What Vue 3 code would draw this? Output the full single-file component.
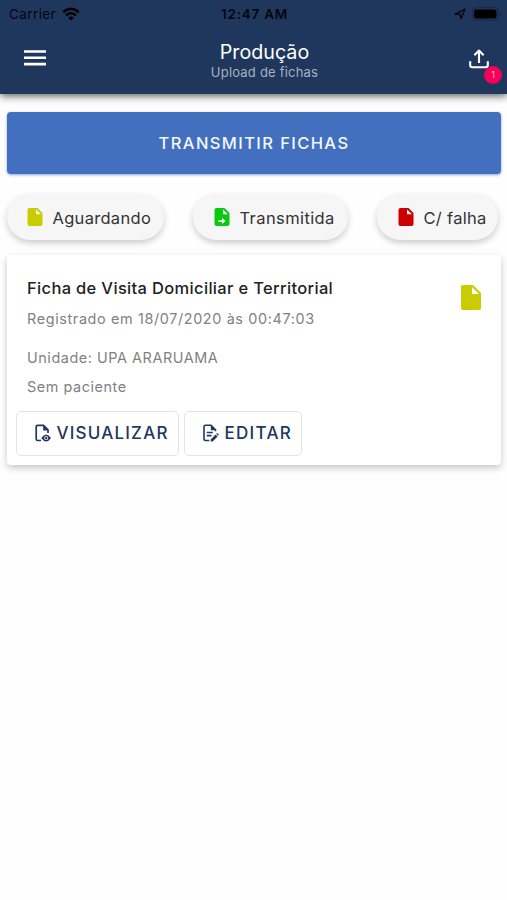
<script setup>
const filters = [
  { label: 'Aguardando', tone: 'waiting', arrow: false },
  { label: 'Transmitida', tone: 'sent', arrow: true },
  { label: 'C/ falha', tone: 'failed', arrow: false },
]
const pendingCount = 1
</script>

<template>
  <div class="screen">
    <header class="header">
      <div class="status">
        <div class="carrier">
          <span class="carrier-name">Carrier</span>
          <svg class="wifi" viewBox="0 0 18 14">
            <path d="M1.3 5.2Q9-1.6 16.7 5.2" fill="none" stroke="#000" stroke-width="2.5" />
            <path d="M4 8.3Q9 4.1 14 8.3" fill="none" stroke="#000" stroke-width="2.3" />
            <path d="M6.2 10.7Q9 8.4 11.8 10.7L9 13.7Z" fill="#000" />
          </svg>
        </div>
        <span class="clock">12:47 AM</span>
        <div class="indicators">
          <svg class="location" viewBox="0 0 12 12">
            <path d="M1 6.2L11 1.2L7 10.6L6 6.4Z" fill="none" stroke="#03060b" stroke-width="1.4" stroke-linejoin="round" />
          </svg>
          <svg class="battery" viewBox="0 0 30 14">
            <rect x="0.7" y="0.7" width="25.6" height="12.4" rx="3.6" fill="none" stroke="#182b4a" stroke-width="1.2" />
            <rect x="2" y="2.5" width="22.5" height="9" rx="2.2" fill="#000" />
            <path d="M28 4.8Q30.2 7 28 9.2Z" fill="#14243f" />
          </svg>
        </div>
      </div>
      <div class="toolbar">
        <svg class="menu" viewBox="0 0 22 16">
          <path d="M0 1.5H22M0 7.8H22M0 14.1H22" stroke="#fff" stroke-width="2.6" />
        </svg>
        <div class="heading">
          <h1>Produção</h1>
          <p>Upload de fichas</p>
        </div>
        <div class="upload">
          <svg viewBox="0 0 20 20">
            <path d="M1.2 12.2V16.2Q1.2 18.2 3.2 18.2H16.8Q18.8 18.2 18.8 16.2V12.2M10 14V2.2M5.4 6.2L10 1.6L14.6 6.2" fill="none" stroke="#fff" stroke-width="2.1" stroke-linejoin="round" />
          </svg>
          <span class="badge">{{ pendingCount }}</span>
        </div>
      </div>
    </header>

    <main class="content">
      <button class="transmit"><span>TRANSMITIR FICHAS</span></button>

      <div class="filters">
        <div v-for="item in filters" :key="item.tone" class="chip" :class="item.tone">
          <svg class="file" viewBox="0 0 16 20">
            <path fill-rule="evenodd" d="M2 1H10.5L15.5 6V17Q15.5 19 13.5 19H2.5Q.5 19 .5 17V3Q.5 1 2.5 1ZM9 2.6V7.3H14Z" />
            <path v-if="item.arrow" d="M4.5 13.2H8V11L11.6 14L8 17V14.9H4.5Z" fill="#fff" />
          </svg>
          <span>{{ item.label }}</span>
        </div>
      </div>

      <article class="card">
        <div class="summary">
          <div>
            <h2>Ficha de Visita Domiciliar e Territorial</h2>
            <p class="date">Registrado em 18/07/2020 às 00:47:03</p>
            <p class="unit">Unidade: UPA ARARUAMA</p>
            <p class="patient">Sem paciente</p>
          </div>
          <svg class="state" viewBox="0 0 20 25">
            <path fill-rule="evenodd" d="M2 0H12L20 8V23Q20 25 18 25H2Q0 25 0 23V2Q0 0 2 0ZM11 2V9H18Z" />
          </svg>
        </div>
        <div class="actions">
          <button class="action view">
            <svg viewBox="0 0 16 18">
              <path d="M6 16.5H2.7Q1.2 16.5 1.2 15V2.8Q1.2 1.3 2.7 1.3H8.5L13 5.8V9" fill="none" stroke="#20375f" stroke-width="1.7" />
              <path d="M8.2 .8V6.4H13.8Z" fill="#20375f" />
              <path fill-rule="evenodd" d="M6.3 14Q11.2 7 16 14Q11.2 21 6.3 14ZM11.2 12A2 2 0 1 0 11.2 16A2 2 0 1 0 11.2 12Z" fill="#20375f" />
              <circle cx="11.2" cy="14" r="1.2" fill="#20375f" />
            </svg>
            <span>VISUALIZAR</span>
          </button>
          <button class="action edit">
            <svg viewBox="0 0 16 18">
              <path d="M6.3 16.5H2.5Q1 16.5 1 15V2.8Q1 1.3 2.5 1.3H8L12.5 5.8V7.2M3.8 8.5H9.8M3.8 11.6H8.5" fill="none" stroke="#20375f" stroke-width="1.6" />
              <path d="M7.8 .8V6.2H13.2Z" fill="#20375f" />
              <path d="M7.7 17.5V15.4L12.6 10.4L14.6 12.4L9.6 17.5ZM13.2 9.8L14.1 8.9L16 10.8L15.1 11.8Z" fill="#20375f" />
            </svg>
            <span>EDITAR</span>
          </button>
        </div>
      </article>
    </main>
  </div>
</template>

<style>
body {
  margin: 0;
  background: #fefefe;
}
</style>

<style scoped>
* {
  box-sizing: border-box;
}
.screen {
  width: 507px;
  height: 900px;
  overflow: hidden;
  font-family: Inter, "Liberation Sans", sans-serif;
  background: #fefefe;
}
h1, h2, p {
  margin: 0;
  font-weight: 400;
  white-space: nowrap;
}
span {
  white-space: nowrap;
}
svg {
  display: block;
  flex: none;
}
button {
  font-family: inherit;
  padding: 0;
  margin: 0;
}
.header {
  height: 94px;
  background: #20375d;
  box-shadow: 0 2px 8px rgba(0, 0, 0, .65);
}
.status {
  height: 28px;
  display: grid;
  grid-template-columns: 1fr auto 1fr;
  align-items: center;
  padding: 0 5px 0 9px;
  color: #03060b;
}
.carrier {
  display: flex;
  align-items: center;
  gap: 6px;
}
.carrier-name {
  font-size: 13.5px;
  letter-spacing: .4px;
}
.wifi {
  width: 18px;
  height: 14px;
}
.clock {
  font-size: 13.5px;
  font-weight: 600;
  letter-spacing: .75px;
  margin-right: 2px;
}
.indicators {
  display: flex;
  justify-content: flex-end;
  align-items: center;
  gap: 6px;
}
.location {
  width: 12px;
  height: 12px;
}
.battery {
  width: 30px;
  height: 14px;
}
.toolbar {
  height: 66px;
  display: grid;
  grid-template-columns: 60px 1fr 38px;
  padding-left: 24px;
}
.menu {
  width: 22px;
  height: 16px;
  margin-top: 22px;
}
.heading {
  text-align: center;
  padding-right: 24px;
}
h1 {
  margin-top: 12px;
  font-size: 19.7px;
  line-height: 24px;
  color: #fff;
}
.heading p {
  font-size: 13px;
  line-height: 16px;
  letter-spacing: .2px;
  color: #a6b0c0;
}
.upload {
  position: relative;
  padding-top: 21px;
}
.upload svg {
  width: 20px;
  height: 20px;
}
.badge {
  position: absolute;
  left: 15px;
  top: 38px;
  width: 18px;
  height: 18px;
  border-radius: 50%;
  background: #f60059;
  color: #ffc1d8;
  font-size: 9px;
  line-height: 18px;
  text-align: center;
}
.content {
  padding: 18px 6px 0 7px;
}
.transmit {
  display: block;
  width: 100%;
  height: 62px;
  border: 0;
  border-radius: 4px;
  background: #4370be;
  box-shadow: 0 1px 3px rgba(67, 112, 190, .6);
  color: #f3f6fd;
  font-size: 16.5px;
  font-weight: 500;
  letter-spacing: 1.4px;
}
.filters {
  display: flex;
  justify-content: space-between;
  padding: 20px 3px 0 0;
}
.chip {
  height: 46px;
  border-radius: 23px;
  display: flex;
  align-items: center;
  gap: 9.5px;
  padding-left: 20px;
  background: #f6f6f6;
  box-shadow: 0 3px 6px rgba(0, 0, 0, .2);
  color: #333;
  font-size: 16.5px;
  letter-spacing: .3px;
}
.chip span {
  padding-top: 1px;
}
.file {
  width: 16px;
  height: 20px;
}
.waiting {
  width: 157px;
  fill: #cacb00;
}
.sent {
  width: 155px;
  padding-left: 21px;
  letter-spacing: .4px;
  fill: #08cb10;
}
.failed {
  width: 121px;
  padding-left: 21px;
  fill: #cb0000;
}
.card {
  margin-top: 15px;
  height: 210px;
  border-radius: 4px;
  background: #fff;
  box-shadow: 0 3px 7px rgba(0, 0, 0, .22);
}
.summary {
  height: 156px;
  display: flex;
  justify-content: space-between;
  padding: 20px 20px 0;
}
h2 {
  font-size: 16.5px;
  font-weight: 500;
  line-height: 26px;
  letter-spacing: .33px;
  color: #222;
}
.summary p {
  font-size: 14.4px;
  line-height: 20px;
  letter-spacing: .63px;
  color: #818181;
}
.date {
  margin-top: 8px;
}
.unit {
  margin-top: 19px;
}
.summary .unit,
.summary .patient {
  letter-spacing: .56px;
}
.patient {
  margin-top: 9px;
}
.state {
  width: 20px;
  height: 25px;
  margin-top: 10px;
  fill: #cacb00;
}
.actions {
  display: flex;
  gap: 5px;
  padding-left: 9px;
}
.action {
  height: 45px;
  display: flex;
  align-items: center;
  gap: 6px;
  padding-left: 17.5px;
  padding-bottom: 1px;
  border: 1px solid #e3e4e6;
  border-radius: 5px;
  background: #fff;
  color: #20375f;
  font-size: 17px;
  font-weight: 500;
  letter-spacing: 1.2px;
}
.action svg {
  width: 16px;
  height: 18px;
}
.view {
  width: 163px;
}
.edit {
  width: 118px;
}
.edit span {
  letter-spacing: 1.3px;
}
</style>
